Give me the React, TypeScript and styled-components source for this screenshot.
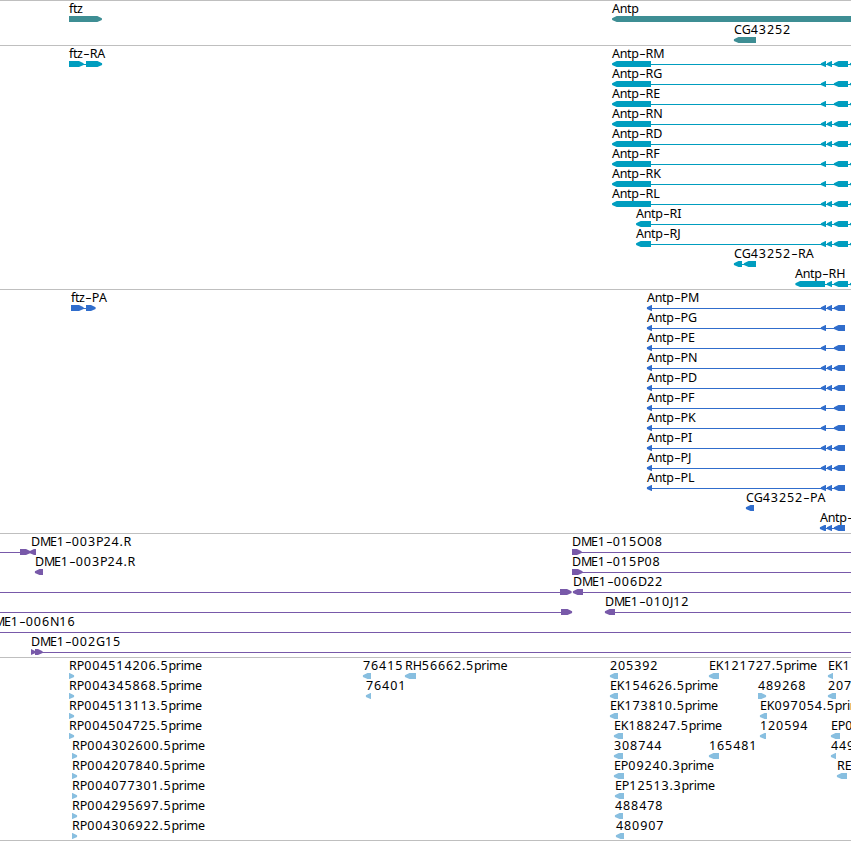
import styled, { createGlobalStyle } from 'styled-components';

type Block = { from: number; to: number; dir?: 'left' | 'right' };

type Feature = {
  label?: string;
  at?: number;
  line?: [number, number];
  blocks: Block[];
};

type TrackData = {
  name: string;
  color: string;
  rowHeight: number;
  height: number;
  rows: Feature[][];
};

const VIEW_WIDTH = 851;

const GlobalStyle = createGlobalStyle`
  html, body {
    margin: 0;
    padding: 0;
    background: #ffffff;
  }
`;

const Browser = styled.main`
  display: flex;
  flex-direction: column;
  width: ${VIEW_WIDTH}px;
  height: 841px;
  overflow: hidden;
  background: #ffffff;
  border-bottom: 1px solid #bfbfbf;
  box-sizing: border-box;
  font-family: 'Noto Sans', 'Open Sans', sans-serif;
  color: #000000;
`;

const Track = styled.section<{ $height: number }>`
  flex: none;
  height: ${({ $height }) => $height}px;
  box-sizing: border-box;
  border-top: 1px solid #bfbfbf;
`;

const Row = styled.div<{ $height: number }>`
  position: relative;
  height: ${({ $height }) => $height}px;
`;

const Label = styled.span<{ $x: number }>`
  position: absolute;
  top: 0;
  left: ${({ $x }) => $x}px;
  font-size: 12.5px;
  line-height: 16px;
  font-kerning: none;
  white-space: nowrap;
`;

const Run = styled.span<{ $spacing: number }>`
  letter-spacing: ${({ $spacing }) => $spacing}px;
`;

const Dash = styled.span`
  display: inline-block;
  width: 7px;
  text-align: center;
  transform: scaleX(1.6);
`;

// Painted over the labels, so descenders stay behind the bars
const Glyphs = styled.svg`
  position: relative;
  z-index: 1;
  display: block;
  width: 100%;
  height: 100%;
  overflow: visible;
`;

const left = (from: number, to: number): Block => ({ from, to, dir: 'left' });
const right = (from: number, to: number): Block => ({ from, to, dir: 'right' });

// Exons shared by the right end of every Antp isoform
const exons = (both: boolean, end: number): Block[] => [
  left(820.5, 826),
  ...(both ? [left(826.5, 832)] : []),
  left(833.5, end),
];

const antpRna = (id: string, start: number, both: boolean): Feature => ({
  label: `Antp-${id}`,
  at: start,
  line: [start + 5, 851],
  blocks: [left(start - 0.3, 651), ...exons(both, 848), left(849.5, 856)],
});

const antpProtein = (id: string, both: boolean): Feature => ({
  label: `Antp-${id}`,
  at: 647,
  line: [650, 840],
  blocks: [left(646.5, 652), ...exons(both, 845)],
});

const read = (label: string, at: number, block: Block): Feature => ({
  label,
  at,
  blocks: [block],
});

const tracks: TrackData[] = [
  {
    name: 'genes',
    color: '#3e8e94',
    rowHeight: 21,
    height: 45,
    rows: [
      [
        { label: 'ftz', at: 69, blocks: [right(69, 102.3)] },
        { label: 'Antp', at: 612, blocks: [left(611.7, 860)] },
      ],
      [{ label: 'CG43252', at: 734, blocks: [left(733.5, 756)] }],
    ],
  },
  {
    name: 'transcripts',
    color: '#009dbf',
    rowHeight: 20,
    height: 244,
    rows: [
      [
        { label: 'ftz-RA', at: 69, line: [80, 88], blocks: [right(69, 84), right(86, 102.5)] },
        antpRna('RM', 612, true),
      ],
      [antpRna('RG', 612, false)],
      [antpRna('RE', 612, false)],
      [antpRna('RN', 612, true)],
      [antpRna('RD', 612, true)],
      [antpRna('RF', 612, false)],
      [antpRna('RK', 612, false)],
      [antpRna('RL', 612, true)],
      [antpRna('RI', 636, true)],
      [antpRna('RJ', 636, true)],
      [{ label: 'CG43252-RA', at: 734, line: [738, 748], blocks: [left(733.5, 742), left(743.5, 756)] }],
      [
        {
          label: 'Antp-RH',
          at: 795,
          line: [800, 851],
          blocks: [left(795, 825), left(826.5, 832), left(833.5, 848), left(849.5, 856)],
        },
      ],
    ],
  },
  {
    name: 'proteins',
    color: '#306dcc',
    rowHeight: 20,
    height: 244,
    rows: [
      [
        { label: 'ftz-PA', at: 71, line: [80, 88], blocks: [right(71, 84), right(86, 96)] },
        antpProtein('PM', true),
      ],
      [antpProtein('PG', false)],
      [antpProtein('PE', false)],
      [antpProtein('PN', true)],
      [antpProtein('PD', true)],
      [antpProtein('PF', false)],
      [antpProtein('PK', false)],
      [antpProtein('PI', true)],
      [antpProtein('PJ', true)],
      [antpProtein('PL', true)],
      [{ label: 'CG43252-PA', at: 746, blocks: [left(745.5, 754)] }],
      [{ label: 'Antp-PH', at: 820, line: [822, 840], blocks: [left(819.5, 826), left(826.5, 832), left(833.5, 845)] }],
    ],
  },
  {
    name: 'BAC ends',
    color: '#7859a9',
    rowHeight: 20,
    height: 124,
    rows: [
      [
        { label: 'DME1-003P24.R', at: 31, line: [0, 30], blocks: [right(20, 31), left(29, 36)] },
        { label: 'DME1-015O08', at: 572, line: [576, 851], blocks: [right(572, 582)] },
      ],
      [
        { label: 'DME1-003P24.R', at: 35, blocks: [left(34.5, 43)] },
        { label: 'DME1-015P08', at: 572, line: [576, 851], blocks: [right(572, 583)] },
      ],
      [
        { line: [0, 565], blocks: [right(560, 572)] },
        { label: 'DME1-006D22', at: 573, line: [578, 851], blocks: [left(572.5, 583)] },
      ],
      [
        { line: [0, 566], blocks: [right(561, 572.5)] },
        { label: 'DME1-010J12', at: 605, line: [610, 851], blocks: [left(604.5, 615)] },
      ],
      [{ label: 'DME1-006N16', at: -15, line: [0, 851], blocks: [] }],
      [{ label: 'DME1-002G15', at: 31, line: [35, 851], blocks: [right(31, 36), right(35, 43)] }],
    ],
  },
  {
    name: 'insertions',
    color: '#88bfe0',
    rowHeight: 20,
    height: 183,
    rows: [
      [
        read('RP004514206.5prime', 69, right(69, 74.5)),
        read('76415', 363, left(362.5, 371)),
        read('RH56662.5prime', 405, left(404.5, 416)),
        read('205392', 610, left(609.5, 618)),
        read('EK121727.5prime', 709, left(708.5, 719)),
        read('EK1', 828, left(827.5, 833)),
      ],
      [
        read('RP004345868.5prime', 69, right(69, 74.5)),
        read('76401', 366, left(365.5, 371)),
        read('EK154626.5prime', 610, left(609.5, 618)),
        read('489268', 758, right(758, 766.5)),
        read('207', 828, left(827.5, 836)),
      ],
      [
        read('RP004513113.5prime', 69, right(69, 74.5)),
        read('EK173810.5prime', 610, left(609.5, 618)),
        read('EK097054.5prime', 760, left(759.5, 767)),
      ],
      [
        read('RP004504725.5prime', 69, right(69, 74.5)),
        read('EK188247.5prime', 614, left(613.5, 623)),
        read('120594', 760, left(759.5, 766)),
        read('EP0', 831, left(830.5, 840)),
      ],
      [
        read('RP004302600.5prime', 72, right(72, 77.5)),
        read('308744', 614, left(613.5, 623)),
        read('165481', 709, left(708.5, 719)),
        read('449', 831, left(830.5, 836)),
      ],
      [
        read('RP004207840.5prime', 72, right(72, 77.5)),
        read('EP09240.3prime', 614, left(613.5, 624)),
        read('RE', 837, left(836.5, 847)),
      ],
      [
        read('RP004077301.5prime', 72, right(72, 77.5)),
        read('EP12513.3prime', 615, left(614.5, 624)),
      ],
      [
        read('RP004295697.5prime', 72, right(72, 77.5)),
        read('488478', 615, left(614.5, 623)),
      ],
      [
        read('RP004306922.5prime', 72, right(72, 77.5)),
        read('480907', 616, left(615.5, 624)),
      ],
    ],
  },
];

// Arrow heads are slightly blunt at the tip
function arrowPoints({ from, to, dir }: Block) {
  if (dir === 'left') {
    const tip = from + 0.4;
    const neck = Math.min(from + 5, to);
    return `${tip},17.3 ${neck},15 ${to},15 ${to},21 ${neck},21 ${tip},18.9`;
  }
  const tip = to - 0.4;
  const neck = Math.max(to - 5, from);
  return `${tip},17.3 ${neck},15 ${from},15 ${from},21 ${neck},21 ${tip},18.9`;
}

function spacingOf(run: string) {
  if (/\d/.test(run)) return 0.9;
  if (run === '.') return 0.5;
  if (run === 'M') return -1.5;
  return /[a-z]/.test(run) ? -0.35 : -0.1;
}

function LabelText({ text }: { text: string }) {
  const runs = text.match(/\d+|[A-Z]?[a-z]+|M|[A-LN-Z]+|\.|-/g) ?? [];
  return (
    <>
      {runs.map((run, i) =>
        run === '-' ? (
          <Dash key={i}>-</Dash>
        ) : (
          <Run key={i} $spacing={spacingOf(run)}>
            {run}
          </Run>
        )
      )}
    </>
  );
}

function TrackRow({ features, color, height }: { features: Feature[]; color: string; height: number }) {
  return (
    <Row $height={height}>
      {features.map((feature, i) =>
        feature.label ? (
          <Label key={i} $x={feature.at ?? 0}>
            <LabelText text={feature.label} />
          </Label>
        ) : null
      )}
      <Glyphs viewBox={`0 0 ${VIEW_WIDTH} ${height}`}>
        {features.map((feature, i) => (
          <g key={i} fill={color}>
            {feature.line && (
              <rect x={feature.line[0]} y={18} width={feature.line[1] - feature.line[0]} height={1} />
            )}
            {feature.blocks.map((block, j) => (
              <polygon key={j} points={arrowPoints(block)} />
            ))}
          </g>
        ))}
      </Glyphs>
    </Row>
  );
}

function App() {
  return (
    <>
      <GlobalStyle />
      <Browser>
        {tracks.map((track) => (
          <Track key={track.name} $height={track.height}>
            {track.rows.map((row, i) => (
              <TrackRow key={i} features={row} color={track.color} height={track.rowHeight} />
            ))}
          </Track>
        ))}
      </Browser>
    </>
  );
}

export default App;
